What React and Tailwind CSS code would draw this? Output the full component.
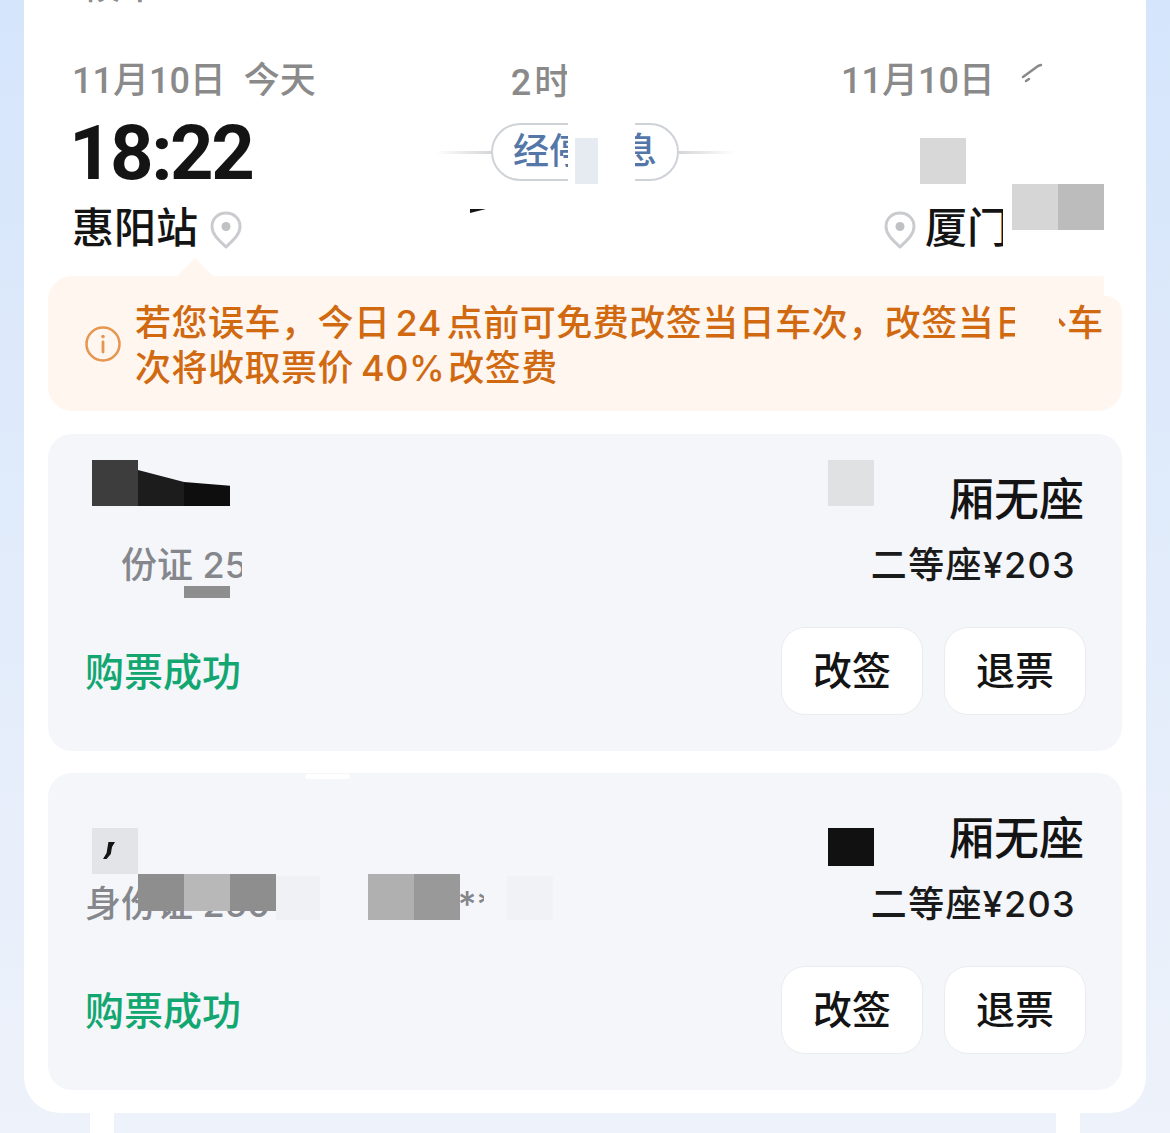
import React from 'react'

const font = 'font-["Roboto","Noto_Sans_CJK_SC",sans-serif]'
const numFont = 'font-["Inter","Noto_Sans_CJK_SC",sans-serif]'

// mosaic squares and wipe-outs that sit over the text in the photo
const patches = [
    // header
    'left-[567px] top-[60px] w-[110px] h-[44px] bg-white',
    'left-[568px] top-[120px] w-[67px] h-[66px] bg-white',
    'left-[575px] top-[138px] w-[23px] h-[46px] bg-[#e6ebf2]',
    'left-[470px] top-[209px] w-[16px] h-[4px] bg-[#141414] [clip-path:polygon(0_0,100%_0,0_100%)]',
    'left-[920px] top-[138px] w-[46px] h-[46px] bg-[#d8d8d8]',
    'left-[1003px] top-[204px] w-[9px] h-[46px] bg-white',
    'left-[1012px] top-[184px] w-[46px] h-[66px] bg-white',
    'left-[1058px] top-[184px] w-[46px] h-[66px] bg-white',
    'left-[1012px] top-[184px] w-[46px] h-[46px] bg-[#d6d6d6]',
    'left-[1058px] top-[184px] w-[46px] h-[46px] bg-[#bcbcbc]',
    // notice
    'left-[1015px] top-[302px] w-[44px] h-[42px] bg-[#fff6f0]',
    'left-[1104px] top-[276px] w-[18px] h-[34px] bg-white',
    'left-[1104px] top-[296px] w-[18px] h-[20px] bg-[#fff6f0] rounded-tr-[16px]',
    // first ticket
    'left-[85px] top-[545px] w-[35px] h-[42px] bg-[#f4f6fa]',
    'left-[242px] top-[545px] w-[280px] h-[42px] bg-[#f4f6fa]',
    'left-[92px] top-[460px] w-[46px] h-[46px] bg-[#3d3d3d]',
    'left-[138px] top-[460px] w-[46px] h-[46px] bg-[#1c1c1c] [clip-path:polygon(0_22%,100%_48%,100%_100%,0_100%)]',
    'left-[184px] top-[460px] w-[46px] h-[46px] bg-[#0e0e0e] [clip-path:polygon(0_48%,100%_56%,100%_100%,0_100%)]',
    'left-[184px] top-[586px] w-[46px] h-[12px] bg-[#8e8e8e]',
    'left-[828px] top-[460px] w-[46px] h-[46px] bg-[#e0e1e3]',
    'left-[880px] top-[475px] w-[68px] h-[50px] bg-[#f4f6fa]',
    // second ticket
    'left-[305px] top-[774px] w-[45px] h-[5px] bg-white rounded-full',
    'left-[92px] top-[828px] w-[46px] h-[46px] bg-[#e3e4e7]',
    'left-[103px] top-[842px] w-[12px] h-[17px] bg-[#141414] [clip-path:polygon(45%_0,100%_0,75%_30%,65%_70%,30%_100%,0_100%,30%_65%)]',
    'left-[138px] top-[874px] w-[46px] h-[37px] bg-[#8e8e8e]',
    'left-[184px] top-[874px] w-[46px] h-[37px] bg-[#b8b8b8]',
    'left-[230px] top-[874px] w-[46px] h-[37px] bg-[#8e8e8e]',
    'left-[276px] top-[876px] w-[92px] h-[44px] bg-[#f4f6fa]',
    'left-[276px] top-[876px] w-[44px] h-[44px] bg-[#f0f1f4]',
    'left-[368px] top-[874px] w-[46px] h-[46px] bg-[#b0b0b0]',
    'left-[414px] top-[874px] w-[46px] h-[46px] bg-[#999999]',
    'left-[484px] top-[876px] w-[70px] h-[44px] bg-[#f4f6fa]',
    'left-[507px] top-[876px] w-[46px] h-[44px] bg-[#f1f2f5]',
    'left-[828px] top-[828px] w-[46px] h-[38px] bg-[#111111]',
    'left-[880px] top-[813px] w-[68px] h-[50px] bg-[#f4f6fa]',
]

function Pin() {
    return (
        <svg className="mt-[2px]" width="32" height="38" viewBox="0 0 32 38" fill="none">
            <path d="M16 36C10 30 2 24 2 15.5C2 7.5 8.300 2 16 2C23.700 2 30 7.500 30 15.500C30 24 22 30 16 36Z" stroke="#c9cbce" strokeWidth="3" strokeLinejoin="round" />
            <circle cx="16" cy="15.500" r="4.500" fill="#bfc1c4" />
        </svg>
    )
}

function Ticket({ className }) {
    return (
        <div className={`h-[317px] rounded-[24px] bg-[#f4f6fa] pt-[42px] pl-[37px] pr-[36px] ${className}`}>
            <div className="h-[50px] pr-[2px] text-right text-[45px] leading-[50px] font-medium text-[#141414]">车厢无座</div>
            <div className={`mt-[17px] flex h-[44px] justify-between pr-[10px] text-[36px] leading-[44px] font-medium ${numFont}`}>
                <span className="text-[#85878c] whitespace-nowrap">身份证 250************</span>
                <span className="text-[#1a1a1a] whitespace-nowrap tracking-[1.3px]">二等座¥203</span>
            </div>
            <div className="mt-[40px] flex items-center justify-between">
                <span className="pt-[5px] text-[39px] font-medium text-[#12a670]">购票成功</span>
                <div className="flex gap-[21px]">
                    <button className="h-[88px] w-[142px] rounded-[24px] border border-[#ebecef] bg-white pt-[3px] text-[39px] font-medium text-[#141414]">改签</button>
                    <button className="h-[88px] w-[142px] rounded-[24px] border border-[#ebecef] bg-white pt-[3px] text-[39px] font-medium text-[#141414]">退票</button>
                </div>
            </div>
        </div>
    )
}

function App() {
    return (
        <div className={`relative h-[1133px] w-[1170px] overflow-hidden bg-gradient-to-b from-[#d5e5fb] to-[#eef2fa] px-[24px] ${font}`}>
            <div className="h-[1113px] overflow-hidden rounded-b-[36px] bg-white px-[24px]">

                <div className="-mt-[34px] flex h-[42px] justify-between pl-[36px] pr-[180px] text-[36px] leading-[42px] font-medium text-[#8a8a8a]">
                    <span>候车 <span className="ml-[110px]">000</span></span>
                    <span className="text-[#12a670]">'</span>
                </div>

                <div className="mt-[52px] grid grid-cols-3 px-[24px]">
                    <div>
                        <div className="h-[40px] whitespace-nowrap pt-[1px] text-[36px] leading-[40px] font-medium text-[#8a8a8a]">11月10日<span className="ml-[18px]">今天</span></div>
                        <div className="-ml-[3px] mt-[17px] h-[71px] text-[76px] leading-[72px] font-bold tracking-[-2.500px] text-[#141414]">18:22</div>
                        <div className="mt-[18px] flex h-[44px] items-center gap-[12px] pt-[1px] text-[42px] leading-[44px] font-medium text-[#141414]">
                            惠阳站 <Pin />
                        </div>
                    </div>

                    <div className="flex flex-col items-center">
                        <div className="h-[40px] whitespace-nowrap text-[36px] leading-[46px] font-medium tracking-[3px] text-[#8a8a8a]">2时10分</div>
                        <div className="mt-[23px] flex items-center">
                            <div className="h-[3px] w-[56px] bg-gradient-to-r from-white to-[#d4d6d9]"></div>
                            <div className="flex h-[58px] w-[188px] items-center justify-center rounded-full border-2 border-[#cfd3d8] text-[36px] font-medium text-[#5577a8]">经停信息</div>
                            <div className="h-[3px] w-[56px] bg-gradient-to-l from-white to-[#d4d6d9]"></div>
                        </div>
                    </div>

                    <div className="pl-[85px]">
                        <div className="flex h-[40px] items-start whitespace-nowrap pt-[1px] text-[36px] leading-[40px] font-medium text-[#8a8a8a]">
                            11月10日
                            <svg className="ml-[26px] mt-[2px]" width="22" height="22" viewBox="0 0 22 22" fill="none">
                                <path d="M2 14L17 3M17 3L20 2M5 18L8 16" stroke="#8a8a8a" strokeWidth="2.500" strokeLinecap="round" />
                            </svg>
                        </div>
                        <div className="mt-[106px] flex h-[44px] items-center gap-[9px] pl-[43px] pt-[1px] whitespace-nowrap text-[42px] leading-[44px] font-medium text-[#141414]">
                            <Pin /> 厦门北站
                        </div>
                    </div>
                </div>

                <div className="relative mt-[26px] flex h-[135px] items-center gap-[14px] rounded-[24px] bg-[#fff6f0] pl-[37px] pr-[16px]">
                    <div className="absolute -top-[18px] left-[129px] h-[18px] w-[36px] bg-[#fff6f0] [clip-path:polygon(50%_0,100%_100%,0_100%)]"></div>
                    <svg className="shrink-0" width="36" height="36" viewBox="0 0 36 36" fill="none">
                        <circle cx="18" cy="18" r="16.500" stroke="#e6964f" strokeWidth="2.500" />
                        <circle cx="18" cy="10.500" r="1.800" fill="#e6964f" />
                        <path d="M18 16V26" stroke="#e6964f" strokeWidth="2.800" strokeLinecap="round" />
                    </svg>
                    <div className={`pt-[4px] text-[36px] leading-[45px] font-medium tracking-[0.5px] whitespace-nowrap text-[#d0690f] ${numFont}`}>
                        <div>若您误车，今日<span className="mx-[5px]">24</span>点前可免费改签当日车次，改签当日外车</div>
                        <div>次将收取票价<span className="ml-[7px] mr-[3px]">40%</span>改签费</div>
                    </div>
                </div>

                <Ticket className="mt-[23px]" />
                <Ticket className="mt-[22px]" />
            </div>

            <div className="absolute bottom-0 left-[90px] h-[20px] w-[24px] bg-white"></div>
            <div className="absolute bottom-0 left-[1056px] h-[20px] w-[24px] bg-white"></div>

            {patches.map((cls, i) => (
                <div className={`absolute ${cls}`} key={i}></div>
            ))}
        </div>
    )
}

export default App
